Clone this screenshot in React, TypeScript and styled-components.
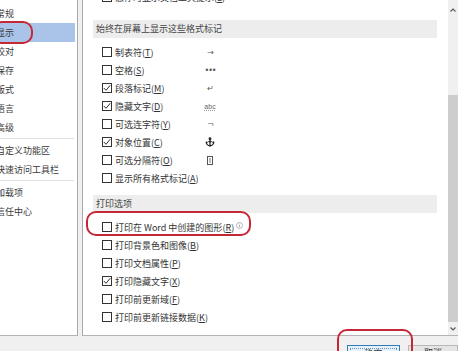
import styled, { createGlobalStyle } from "styled-components";
import { Anchor } from "lucide-react";
import React from "react";

const GlobalStyle = createGlobalStyle`
  html, body {
    margin: 0;
    padding: 0;
    background: #f0f0f0;
    font-family: "Noto Sans CJK SC", "Noto Sans", sans-serif;
    overflow: hidden;
  }
`;

const Root = styled.div`
  position: relative;
  width: 458px;
  height: 351px;
  overflow: hidden;
  background: #f0f0f0;
  color: #333;
  font-size: 9px;
`;

const Main = styled.div`
  display: flex;
  gap: 4px;
  height: 336px;
`;

const Nav = styled.div`
  width: 78px;
  flex: none;
  background: #fff;
  border-right: 1px solid #a9a9a9;
  border-bottom: 1px solid #b4b4b4;
  padding-top: 4px;
  box-sizing: border-box;
  height: 336px;
`;

const NavItem = styled.div<{ $active?: boolean }>`
  height: 19px;
  line-height: 19px;
  margin-right: 2px;
  text-indent: -4px;
  white-space: nowrap;
  overflow: hidden;
  color: #3a3a3a;
  background: ${(p) => (p.$active ? "#a9c4e8" : "transparent")};
`;

const NavDivider = styled.div`
  height: 1px;
  margin: 1px 3px 2px 0;
  background: #e0e0e0;
`;

const Panel = styled.div`
  flex: 1;
  display: flex;
  background: #fff;
  border-left: 1px solid #a9a9a9;
  border-bottom: 1px solid #b4b4b4;
  box-sizing: border-box;
  height: 336px;
  overflow: hidden;
`;

const Content = styled.div`
  flex: 1;
  padding: 0 11px 0 10px;
  overflow: hidden;
`;

const PartialRow = styled.div`
  margin-top: -12px;
  margin-bottom: 14px;
`;

const SectionHeader = styled.div<{ $gap?: number }>`
  height: 18px;
  line-height: 18px;
  padding-left: 3px;
  margin-top: ${(p) => p.$gap ?? 0}px;
  background: #ededed;
  color: #444;
`;

const List = styled.div`
  padding-top: 5px;
`;

const Row = styled.div`
  display: flex;
  align-items: center;
  height: 18px;
  padding-left: 9px;
  white-space: nowrap;
`;

const Box = styled.span`
  width: 10px;
  height: 10px;
  box-sizing: border-box;
  border: 1px solid #333;
  background: #fff;
  display: flex;
  align-items: center;
  justify-content: center;
  margin-right: 3px;
  flex: none;
`;

const Label = styled.span<{ $min?: number }>`
  min-width: ${(p) => p.$min ?? 0}px;
  color: #333;
  u {
    text-underline-offset: 1px;
  }
`;

const SymCell = styled.span`
  width: 12px;
  display: flex;
  justify-content: center;
  align-items: center;
  color: #555;
`;

const Sym = styled.span`
  font-family: "DejaVu Sans", sans-serif;
  font-size: 8px;
  letter-spacing: -1px;
  color: #555;
`;

const Abc = styled.span`
  font-family: "Liberation Sans", sans-serif;
  font-size: 7px;
  color: #666;
  text-decoration: underline dotted #999;
`;

const InfoWrap = styled.span`
  display: flex;
  margin-left: 2px;
  margin-top: -4px;
`;

const Scrollbar = styled.div`
  width: 10px;
  flex: none;
  background: #f0f0f0;
  display: flex;
  flex-direction: column;
`;

const ArrowBox = styled.div<{ $h: number }>`
  height: ${(p) => p.$h}px;
  display: flex;
  align-items: center;
  justify-content: center;
`;

const Track = styled.div`
  flex: 1;
  padding-top: 75px;
`;

const Thumb = styled.div`
  height: 227px;
  background: #cdcdcd;
`;

const Footer = styled.div`
  display: flex;
  justify-content: flex-end;
  gap: 8px;
  padding-top: 9px;
  height: 15px;
`;

const Button = styled.div`
  width: 50px;
  height: 22px;
  box-sizing: border-box;
  border: 1px solid #b8b8b8;
  background: #e5e5e5;
  text-align: center;
  line-height: 11px;
  padding-top: 1px;
  color: #333;
  flex: none;
`;

const OkButton = styled(Button)`
  width: 53px;
  border-color: #2f7bbd;
  background: #e5f1fb;
  padding: 2px;
`;

const Focus = styled.div`
  height: 16px;
  border: 1px dotted #6a8db0;
  border-bottom: none;
  box-sizing: border-box;
  line-height: 10px;
`;

const Ring = styled.div<{ $x: number; $y: number; $w: number; $h: number }>`
  position: absolute;
  left: ${(p) => p.$x}px;
  top: ${(p) => p.$y}px;
  width: ${(p) => p.$w}px;
  height: ${(p) => p.$h}px;
  box-sizing: border-box;
  border: 2.5px solid #c52834;
  border-radius: 10px;
  pointer-events: none;
`;

type Opt = { label: string; key: string; checked?: boolean; symbol?: React.ReactNode; info?: boolean };

const navItems = [
  ["常规", "显示", "校对", "保存", "版式", "语言", "高级"],
  ["自定义功能区", "快速访问工具栏"],
  ["加载项", "信任中心"],
];

const CheckMark = () => (
  <svg width="8" height="8" viewBox="0 0 8 8">
    <polyline points="0.8,4 3,6.3 7.3,1.2" fill="none" stroke="#333" strokeWidth="1" />
  </svg>
);

const Separator = () => (
  <svg width="6" height="9" viewBox="0 0 6 9">
    <rect x="0.5" y="0.5" width="5" height="8" fill="none" stroke="#555" strokeWidth="1" />
    <line x1="3" y1="2" x2="3" y2="7" stroke="#777" strokeWidth="1" />
  </svg>
);

const InfoIcon = () => (
  <svg width="7" height="7" viewBox="0 0 8 8">
    <circle cx="4" cy="4" r="3.4" fill="none" stroke="#999" strokeWidth="0.8" />
    <line x1="4" y1="3.4" x2="4" y2="6" stroke="#999" strokeWidth="0.9" />
    <circle cx="4" cy="2.2" r="0.5" fill="#999" />
  </svg>
);

const marks: Opt[] = [
  { label: "制表符", key: "T", symbol: <Sym>→</Sym> },
  { label: "空格", key: "S", symbol: <Sym>•••</Sym> },
  { label: "段落标记", key: "M", checked: true, symbol: <Sym>↵</Sym> },
  { label: "隐藏文字", key: "D", checked: true, symbol: <Abc>abc</Abc> },
  { label: "可选连字符", key: "Y", symbol: <Sym>¬</Sym> },
  { label: "对象位置", key: "C", checked: true, symbol: <Anchor size={10} strokeWidth={3} color="#222" /> },
  { label: "可选分隔符", key: "O", symbol: <Separator /> },
  { label: "显示所有格式标记", key: "A" },
];

const printing: Opt[] = [
  { label: "打印在 Word 中创建的图形", key: "R", info: true },
  { label: "打印背景色和图像", key: "B" },
  { label: "打印文档属性", key: "P" },
  { label: "打印隐藏文字", key: "X", checked: true },
  { label: "打印前更新域", key: "F" },
  { label: "打印前更新链接数据", key: "K" },
];

const OptionRow = ({ opt, labelWidth }: { opt: Opt; labelWidth?: number }) => (
  <Row>
    <Box>{opt.checked && <CheckMark />}</Box>
    <Label $min={labelWidth}>
      {opt.label}(<u>{opt.key}</u>)
    </Label>
    {opt.info && (
      <InfoWrap>
        <InfoIcon />
      </InfoWrap>
    )}
    {opt.symbol && <SymCell>{opt.symbol}</SymCell>}
  </Row>
);

const Chevron = ({ up }: { up?: boolean }) => (
  <svg width="6" height="4" viewBox="0 0 6 4">
    <polyline
      points={up ? "0.5,3.5 3,1 5.5,3.5" : "0.5,0.5 3,3 5.5,0.5"}
      fill="none"
      stroke="#555"
      strokeWidth="1.1"
    />
  </svg>
);

export default function App() {
  return (
    <Root>
      <GlobalStyle />
      <Main>
        <Nav>
          {navItems.map((group, gi) => (
            <React.Fragment key={gi}>
              {gi > 0 && <NavDivider />}
              {group.map((name) => (
                <NavItem key={name} $active={name === "显示"}>
                  {name}
                </NavItem>
              ))}
            </React.Fragment>
          ))}
        </Nav>
        <Panel>
          <Content>
            <PartialRow>
              <OptionRow opt={{ label: "悬停时显示文档工具提示", key: "L", checked: true }} />
            </PartialRow>
            <SectionHeader>始终在屏幕上显示这些格式标记</SectionHeader>
            <List>
              {marks.map((m) => (
                <OptionRow key={m.key} opt={m} labelWidth={89} />
              ))}
            </List>
            <SectionHeader $gap={8}>打印选项</SectionHeader>
            <List>
              {printing.map((p) => (
                <OptionRow key={p.key} opt={p} />
              ))}
            </List>
          </Content>
          <Scrollbar>
            <ArrowBox $h={20}>
              <Chevron up />
            </ArrowBox>
            <Track>
              <Thumb />
            </Track>
            <ArrowBox $h={13}>
              <Chevron />
            </ArrowBox>
          </Scrollbar>
        </Panel>
      </Main>
      <Footer>
        <OkButton>
          <Focus>确定</Focus>
        </OkButton>
        <Button>取消</Button>
      </Footer>
      <Ring $x={-8} $y={21} $w={41} $h={23} />
      <Ring $x={86} $y={211} $w={165} $h={25} />
      <Ring $x={337} $y={329} $w={76} $h={40} />
    </Root>
  );
}
